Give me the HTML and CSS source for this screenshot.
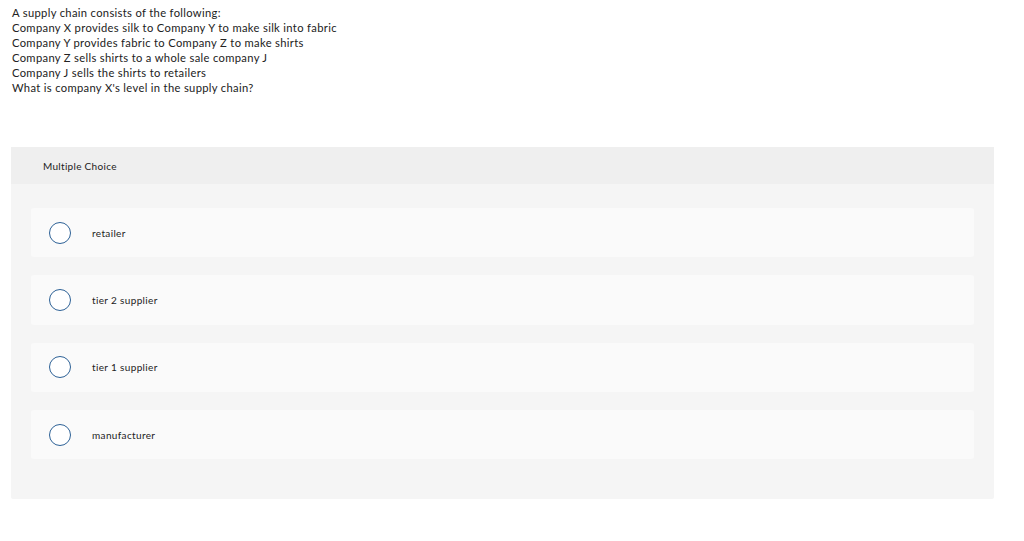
FILE: index.html
```html
<!DOCTYPE html>
<html>
<head>
<meta charset="utf-8">
<link rel="stylesheet" href="styles.css">
</head>
<body>
<div class="question">
  <p>A supply chain consists of the following:</p>
  <p>Company X provides silk to Company Y to make silk into fabric</p>
  <p>Company Y provides fabric to Company Z to make shirts</p>
  <p>Company Z sells shirts to a whole sale company J</p>
  <p>Company J sells the shirts to retailers</p>
  <p>What is company X's level in the supply chain?</p>
</div>
<div class="panel">
  <div class="panel-header">Multiple Choice</div>
  <div class="panel-body">
    <label class="option"><span class="radio"></span><span class="opt-text">retailer</span></label>
    <label class="option"><span class="radio"></span><span class="opt-text">tier 2 supplier</span></label>
    <label class="option"><span class="radio"></span><span class="opt-text">tier 1 supplier</span></label>
    <label class="option"><span class="radio"></span><span class="opt-text">manufacturer</span></label>
  </div>
</div>
</body>
</html>
```
FILE: styles.css
```css
html, body {
  margin: 0;
  padding: 0;
  background: #ffffff;
}
body {
  font-family: Lato, "Open Sans", "Liberation Sans", sans-serif;
  color: #222222;
}
.question {
  padding: 5px 0 0 12px;
  font-size: 11.2px;
  line-height: 15px;
  letter-spacing: 0.33px;
}
.question p {
  margin: 0;
}
.panel {
  margin: 52px 0 0 11px;
  width: 983px;
  background: #f5f5f5;
  border-radius: 2px;
}
.panel-header {
  height: 37px;
  background: #efefef;
  display: flex;
  align-items: center;
  padding-left: 32px;
  font-size: 10px;
  letter-spacing: 0.3px;
  color: #222;
}
.panel-body {
  padding: 24px 20px 40px 20px;
  display: flex;
  flex-direction: column;
  gap: 18px;
}
.option {
  height: 49.3px;
  background: #fafafa;
  border-radius: 3px;
  display: flex;
  align-items: center;
  padding-left: 18px;
}
.radio {
  width: 20px;
  height: 20px;
  border: 1.2px solid #2d6196;
  border-radius: 50%;
  background: #fff;
  flex: none;
}
.opt-text {
  margin-left: 21px;
  font-size: 10px;
  letter-spacing: 0.35px;
  color: #222;
}
```
